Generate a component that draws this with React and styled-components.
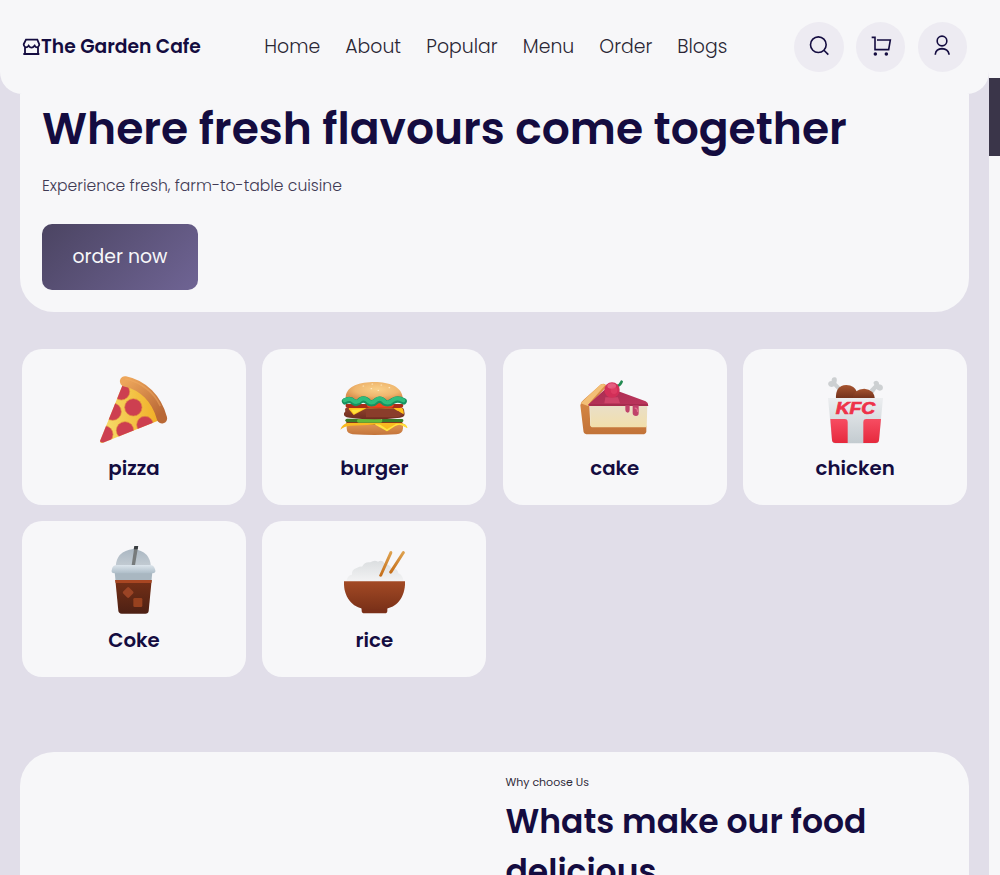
import React from 'react';
import styled, { createGlobalStyle } from 'styled-components';

const GlobalStyle = createGlobalStyle`
  * { box-sizing: border-box; margin: 0; padding: 0; }
  html, body { height: 100%; overflow: hidden; }
  body {
    background: #f7f7f9;
    color: #140c40;
    font-family: Poppins, Inter, "Liberation Sans", sans-serif;
  }
  svg { display: block; }
`;

const Shell = styled.div`
  display: flex;
  height: 875px;
  overflow: hidden;
`;

const Page = styled.div`
  width: 989px;
  flex: none;
  height: 875px;
  overflow: hidden;
  background: #e1dee9;
`;

const ScrollTrack = styled.div`
  flex: 1;
  padding-top: 78px;
  background: #f7f7f9;
`;

const ScrollThumb = styled.div`
  height: 78px;
  background: #3a3549;
`;

const Header = styled.header`
  display: flex;
  align-items: center;
  height: 94px;
  padding: 0 22px;
  background: #f7f7f9;
  border-radius: 0 0 22px 22px;
`;

const Brand = styled.a`
  display: flex;
  align-items: center;
  width: 242.3px;
  font-size: 18.72px;
  line-height: 28px;
  font-weight: 600;
  white-space: nowrap;
`;

const Nav = styled.nav`
  display: flex;
  gap: 25px;
  flex: 1;
`;

const NavLink = styled.a`
  width: ${(p) => p.$width}px;
  font-size: 18.85px;
  font-weight: 300;
  line-height: 28px;
  white-space: nowrap;
  color: #2a2634;
`;

const Actions = styled.div`
  display: flex;
  gap: 12.2px;
`;

const RoundButton = styled.button`
  display: grid;
  place-items: center;
  width: 49.5px;
  height: 50px;
  border: 0;
  border-radius: 50%;
  background: #edebf2;
  color: #140c40;
`;

const LineIcon = styled.svg`
  width: ${(p) => p.$width || 24}px;
  height: ${(p) => p.$height || 24}px;
  flex: none;
  fill: none;
  stroke: currentColor;
  stroke-width: ${(p) => p.$stroke || 4.8};
`;

const Hero = styled.section`
  height: 218px;
  margin: 0 20px;
  padding: 0 22px;
  background: #f7f7f9;
  border-radius: 0 0 34px 34px;
`;

const HeroTitle = styled.h1`
  padding-top: 1px;
  font-size: 44px;
  line-height: 67px;
  font-weight: 600;
  white-space: nowrap;
`;

const HeroText = styled.p`
  margin-top: 12px;
  font-size: 15.6px;
  line-height: 24px;
  font-weight: 300;
  color: #3f3a54;
`;

const OrderButton = styled.button`
  display: block;
  width: 156px;
  height: 66px;
  margin-top: 26px;
  padding-bottom: 1px;
  border: 0;
  border-radius: 10px;
  background: linear-gradient(135deg, #4b4462, #6f6494);
  color: #f7f7f9;
  font-family: inherit;
  font-size: 18.8px;
  font-weight: 400;
`;

const Categories = styled.section`
  display: grid;
  grid-template-columns: repeat(4, 224px);
  grid-auto-rows: 156px;
  gap: 16px;
  column-gap: 16.4px;
  margin: 37px 22px 75px;
`;

const Card = styled.article`
  display: flex;
  flex-direction: column;
  align-items: center;
  padding-top: 25px;
  border-radius: 20px;
  background: #f7f7f9;
`;

const CardLabel = styled.h3`
  margin-top: 7px;
  font-size: 19.8px;
  line-height: 30px;
  font-weight: 600;
`;

const WhySection = styled.section`
  height: 400px;
  margin: 0 20px;
  padding: 20px 22px 0 485.5px;
  border-radius: 34px 34px 0 0;
  background: #f7f7f9;
`;

const Eyebrow = styled.p`
  font-size: 11px;
  line-height: 20px;
  font-weight: 400;
  color: #2f2b3a;
`;

const WhyTitle = styled.h2`
  margin-top: 5px;
  width: 400px;
  font-size: 33px;
  line-height: 49.5px;
  font-weight: 600;
`;

const Art = styled.svg`
  width: 72px;
  height: 72px;
  flex: none;
`;

function Gradient({ id, from, to, x2 = 0, y2 = 1 }) {
  return (
    <linearGradient id={id} x1="0" y1="0" x2={x2} y2={y2}>
      <stop stopColor={from} />
      <stop offset="1" stopColor={to} />
    </linearGradient>
  );
}

function StoreIcon() {
  return (
    <LineIcon viewBox="66 113 57 54" $width={19} $height={18} $stroke={5.4}>
      <path d="M78 118H112L118 132Q118 138 113 141Q107 142 104 136Q99 142 95 142Q90 142 86 136Q82 142 76 141Q71 138 71 132ZM75 141V161H114V141M70 161H118" />
    </LineIcon>
  );
}

function SearchIcon() {
  return (
    <LineIcon viewBox="80 106 72 72">
      <circle cx="114" cy="135" r="23.5" />
      <path d="M130 151L144 165" />
    </LineIcon>
  );
}

function CartIcon() {
  return (
    <LineIcon viewBox="267 106 72 72">
      <path d="M275 113H285V150H326L331 121H291" />
      <circle cx="286" cy="163" r="5.3" fill="currentColor" stroke="none" />
      <circle cx="319" cy="163" r="5.3" fill="currentColor" stroke="none" />
    </LineIcon>
  );
}

function UserIcon() {
  return (
    <LineIcon viewBox="451 106 72 72">
      <circle cx="487" cy="124" r="14.5" />
      <path d="M467 165V163Q469 148 487 147Q505 148 508 163V165" />
    </LineIcon>
  );
}

function Pizza() {
  const slice = 'M129 72 L60 243 Q59 250 67 249 L238 181 C229 124 190 88 129 72Z';
  return (
    <Art viewBox="54 42 216 216">
      <defs>
        <Gradient id="cheese" from="#f6df70" to="#f1ad25" x2={1} y2={0} />
        <Gradient id="crust" from="#eda65b" to="#b96836" x2={0.8} />
        <clipPath id="slice"><path d={slice} /></clipPath>
      </defs>
      <path d={slice} fill="url(#cheese)" />
      <g clipPath="url(#slice)" fill="#cd3f50" stroke="#e18b43" strokeWidth="2">
        <circle cx="124" cy="95" r="25" />
        <circle cx="160" cy="142" r="26" />
        <circle cx="98" cy="155" r="26" />
        <circle cx="195" cy="194" r="25" />
        <circle cx="135" cy="211" r="26" />
        <circle cx="73" cy="223" r="26" />
      </g>
      <path d="M135 64 C190 75 230 117 246 175" fill="none" stroke="url(#crust)" strokeWidth="31" strokeLinecap="round" />
      <path d="M137 57 C187 68 224 100 240 136" fill="none" stroke="#f2ad66" strokeWidth="5" strokeLinecap="round" opacity=".45" />
    </Art>
  );
}

function Burger() {
  const seeds = [[130, 78], [157, 72], [184, 75], [154, 86], [175, 91], [208, 83]];
  return (
    <Art viewBox="54 42 216 216">
      <defs>
        <radialGradient id="bun" cx=".55" cy=".4" r=".6">
          <stop stopColor="#f9cf88" /><stop offset=".65" stopColor="#efb66e" /><stop offset="1" stopColor="#da9150" />
        </radialGradient>
        <Gradient id="base" from="#df9553" to="#c3743b" />
        <Gradient id="patty" from="#92432e" to="#6d2c20" />
      </defs>
      <path d="M80 191H249V205Q248 222 229 223Q163 227 98 223Q80 221 80 205Z" fill="url(#base)" />
      <path d="M79 180H247V194H79Z" fill="#823b1d" />
      <path d="M61 209Q67 192 82 189H244Q261 192 262 204L247 196Q236 191 224 199L201 214L181 197Q170 190 159 194L91 197Q72 198 61 209Z" fill="#f9b921" />
      <path d="M163 193Q178 190 188 199L201 208L229 191H244Q261 193 262 204L247 197Q236 191 224 199L201 214Z" fill="#ffe23d" />
      <rect x="76" y="176" width="63" height="10" rx="5" fill="#3d7e28" />
      <rect x="184" y="177" width="66" height="9" rx="4" fill="#37812a" />
      <rect x="111" y="177" width="76" height="11" rx="5" fill="#65ba39" />
      <path d="M76 154Q72 142 86 141H240Q253 141 253 156Q258 171 240 173Q163 183 89 173Q69 172 72 160Z" fill="url(#patty)" />
      <path d="M88 142H243Q252 146 251 163L235 155L221 145H139L101 165L86 147Z" fill="#ffc21b" />
      <path d="M93 149L128 148L102 162Z" fill="#ffe33d" />
      <path d="M137 151Q175 139 235 153L248 162L235 172H138Z" fill="#8a3d2b" />
      <path d="M78 132H248Q255 143 238 144H91Q72 145 78 132Z" fill="#a92c18" />
      <rect x="141" y="129" width="80" height="14" rx="7" fill="#ed461c" />
      <path d="M77 111C80 77 120 66 164 66S244 80 248 111Q248 120 226 120H99Q78 121 77 111Z" fill="url(#bun)" />
      <path d="M75 124Q90 115 101 126Q110 133 122 121Q134 114 147 128Q158 134 170 122Q182 114 194 128Q207 134 220 122Q234 114 251 124" fill="none" stroke="#199160" strokeWidth="19" strokeLinecap="round" />
      <path d="M74 121Q90 112 101 123Q110 131 122 118Q134 111 147 125Q158 132 170 119Q182 111 194 125Q207 132 220 119Q234 111 250 121" fill="none" stroke="#2fbd7d" strokeWidth="12" strokeLinecap="round" />
      {seeds.map(([x, y]) => <ellipse key={`${x}-${y}`} cx={x} cy={y} rx="2.6" ry="1.8" fill="#ffebc4" />)}
    </Art>
  );
}

function Cake() {
  return (
    <Art viewBox="57 42 216 216">
      <defs>
        <Gradient id="pastry" from="#df914a" to="#c27339" />
        <Gradient id="cream" from="#e9dfc9" to="#f2dfab" />
        <Gradient id="glaze" from="#a82c51" to="#bd365d" x2={1} />
      </defs>
      <path d="M61 136Q63 124 71 119L123 73Q131 69 137 74L139 81L88 136L91 197H259V215Q258 222 248 223H79Q70 221 70 211Z" fill="url(#pastry)" />
      <path d="M62 130L120 75Q129 69 136 75L91 126L84 138Z" fill="#f3bf76" />
      <path d="M90 135H262L260 202H99Q91 202 91 194Z" fill="url(#cream)" />
      <path d="M84 134L132 91Q144 82 159 88L257 124Q265 128 265 138H89Z" fill="url(#glaze)" />
      <path d="M88 135H264" stroke="#a02b4b" strokeWidth="4" />
      <path d="M136 112H174L180 130H133Z" fill="#df5075" opacity=".6" />
      <path d="M196 136H209V150Q209 158 203 158Q196 157 196 150ZM218 136H236V160Q236 168 228 168Q219 168 218 160Z" fill="#c0426a" />
      <path d="M224 145Q232 143 233 156" fill="none" stroke="#e06c8c" strokeWidth="4" />
      <path d="M168 80Q181 77 185 65" fill="none" stroke="#238b52" strokeWidth="8" strokeLinecap="round" />
      <circle cx="156" cy="90" r="23" fill="#d22f58" />
      <ellipse cx="155" cy="78" rx="13" ry="8" fill="#ed7291" opacity=".7" />
      <ellipse cx="162" cy="91" rx="10" ry="11" fill="#e8476b" opacity=".5" />
    </Art>
  );
}

function Chicken() {
  return (
    <Art viewBox="57 42 216 216">
      <defs>
        <Gradient id="bucket" from="#eceef0" to="#c3cbd0" />
        <Gradient id="redPanel" from="#f74d62" to="#e6293d" />
        <Gradient id="drumstick" from="#a65430" to="#70301b" />
      </defs>
      <path d="M125 85L109 69Q114 51 103 52Q94 53 95 63Q82 64 85 75Q91 85 102 79L116 93Z" fill="#cdd0d2" />
      <path d="M209 89L223 75Q216 63 229 62Q238 64 237 73Q252 75 248 88Q240 97 229 87L219 101Z" fill="#cdd0d2" />
      <path d="M108 117Q105 77 139 75Q164 75 172 98V117Z" fill="url(#drumstick)" />
      <path d="M158 117Q162 86 193 86Q222 88 225 117Z" fill="url(#drumstick)" />
      <path d="M84 114H249L237 241Q236 250 227 250H106Q97 250 96 241Z" fill="url(#bucket)" />
      <path d="M91 177H134Q143 177 143 187V249H106Q97 249 96 240Z" fill="url(#redPanel)" />
      <path d="M243 177H199Q190 177 190 187V249H227Q236 249 237 240Z" fill="url(#redPanel)" />
      <text x="107" y="162" fill="#ee3249" stroke="#ee3249" strokeWidth="2" fontFamily="Liberation Sans, sans-serif" fontSize="47" fontWeight="700" fontStyle="italic" textLength="119" lengthAdjust="spacingAndGlyphs">KFC</text>
    </Art>
  );
}

function Coke() {
  return (
    <Art viewBox="54 48 216 216">
      <defs>
        <Gradient id="dome" from="#aab7c2" to="#c5cdd4" />
        <Gradient id="rim" from="#dce5ec" to="#aebdc8" />
        <Gradient id="cola" from="#753017" to="#4d2014" />
      </defs>
      <path d="M107 112Q108 63 160 57Q211 63 213 112Z" fill="url(#dome)" />
      <path d="M164 45H175L165 106H155Z" fill="#777b7c" />
      <path d="M164 45H175L173 58H161Z" fill="#393d40" />
      <path d="M104 126H217L214 156H107Z" fill="#a9b7c1" />
      <path d="M106 150H215L206 243Q205 251 196 251H125Q116 250 115 242Z" fill="url(#cola)" />
      <path d="M106 150H215L214 159H107Z" fill="#a84622" />
      <path d="M111 105H210Q222 105 225 118Q230 129 217 130H104Q91 130 96 117Q98 105 111 105Z" fill="url(#rim)" />
      <rect x="132" y="175" width="25" height="25" rx="4" transform="rotate(45 144.5 187.5)" fill="#9b4425" />
      <rect x="160" y="204" width="27" height="27" rx="4" fill="#97411f" />
    </Art>
  );
}

function Rice() {
  return (
    <Art viewBox="54 48 216 216">
      <defs>
        <Gradient id="grain" from="#dbdee0" to="#f3f3f4" />
        <Gradient id="bowl" from="#a34a25" to="#7c3219" />
        <Gradient id="stick" from="#dfa451" to="#c46c18" />
      </defs>
      <path d="M79 155Q82 135 96 134Q94 119 110 114Q121 109 126 110Q135 94 151 97Q163 89 174 95Q188 88 194 101Q211 103 216 118Q233 114 235 130Q248 134 251 155Z" fill="url(#grain)" />
      <path d="M214 63Q220 66 214 76L186 138Q182 143 177 137L207 70Q209 62 214 63Z" fill="url(#stick)" />
      <path d="M251 63Q258 67 252 73L216 129Q210 134 207 126L244 69Q247 62 251 63Z" fill="url(#stick)" />
      <path d="M124 229H202V242Q202 250 194 250H134Q125 250 125 242Z" fill="#7b3019" />
      <path d="M72 154H255V164C252 208 225 237 185 237H142C102 237 74 207 72 164Z" fill="url(#bowl)" />
    </Art>
  );
}

const links = [
  { text: 'Home', width: 56 },
  { text: 'About', width: 56 },
  { text: 'Popular', width: 71.5 },
  { text: 'Menu', width: 51.5 },
  { text: 'Order', width: 53 },
  { text: 'Blogs', width: 50 },
];

const foods = [
  { name: 'pizza', Picture: Pizza },
  { name: 'burger', Picture: Burger },
  { name: 'cake', Picture: Cake },
  { name: 'chicken', Picture: Chicken },
  { name: 'Coke', Picture: Coke },
  { name: 'rice', Picture: Rice },
];

export default function App() {
  return (
    <Shell>
      <GlobalStyle />
      <Page>
        <Header>
          <Brand><StoreIcon />The Garden Cafe</Brand>
          <Nav>
            {links.map((l) => (
              <NavLink key={l.text} $width={l.width}>{l.text}</NavLink>
            ))}
          </Nav>
          <Actions>
            <RoundButton aria-label="Search"><SearchIcon /></RoundButton>
            <RoundButton aria-label="Cart"><CartIcon /></RoundButton>
            <RoundButton aria-label="Account"><UserIcon /></RoundButton>
          </Actions>
        </Header>
        <Hero>
          <HeroTitle>Where fresh flavours come together</HeroTitle>
          <HeroText>Experience fresh, farm-to-table cuisine</HeroText>
          <OrderButton>order now</OrderButton>
        </Hero>
        <Categories>
          {foods.map(({ name, Picture }) => (
            <Card key={name}>
              <Picture />
              <CardLabel>{name}</CardLabel>
            </Card>
          ))}
        </Categories>
        <WhySection>
          <Eyebrow>Why choose Us</Eyebrow>
          <WhyTitle>Whats make our food delicious</WhyTitle>
        </WhySection>
      </Page>
      <ScrollTrack><ScrollThumb /></ScrollTrack>
    </Shell>
  );
}
